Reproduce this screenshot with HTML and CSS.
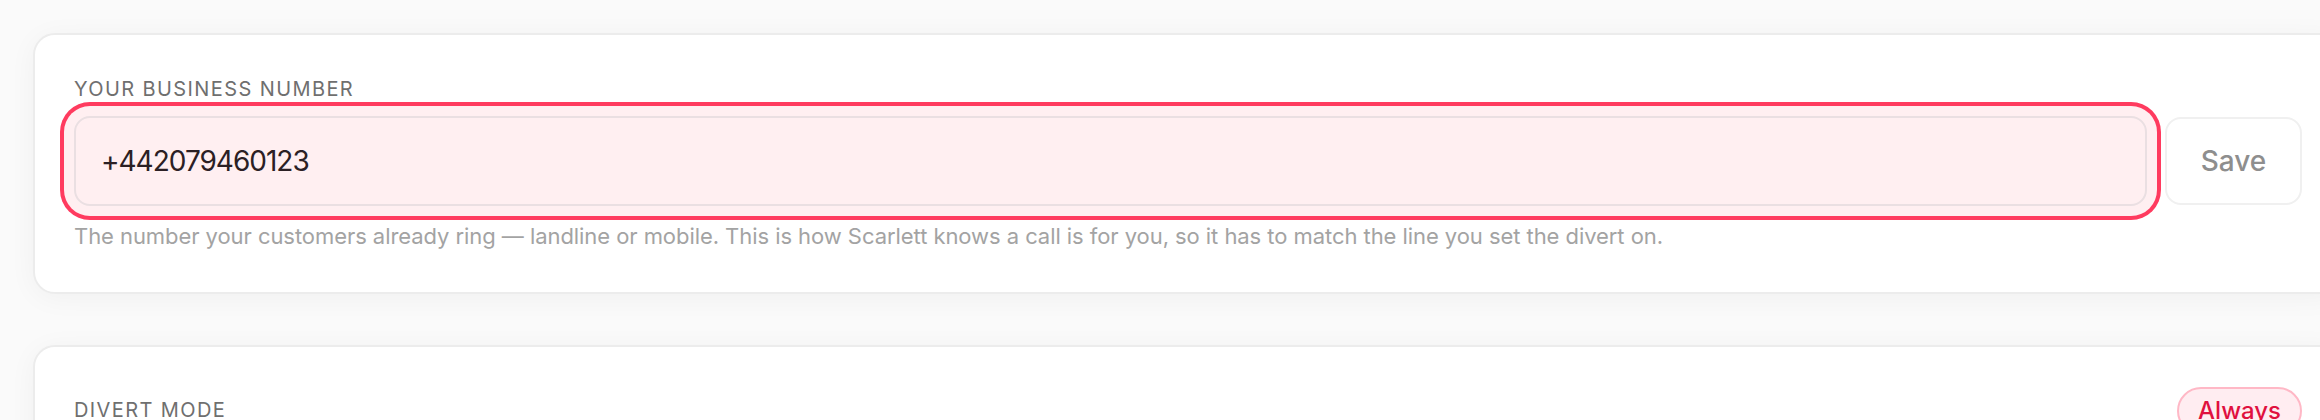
FILE: index.html
```html
<!DOCTYPE html>
<html lang="en">
<head>
<meta charset="utf-8">
<title>Business number</title>
<link rel="stylesheet" href="styles.css">
</head>
<body>
<main class="page">
  <section class="card">
    <label class="field-label" for="biz">YOUR BUSINESS NUMBER</label>
    <div class="field-row">
      <input id="biz" class="field-input is-error" type="text" value="+442079460123">
      <button class="save-btn" type="button">Save</button>
    </div>
    <p class="hint">The number your customers already ring — landline or mobile. This is how Scarlett knows a call is for you, so it has to match the line you set the divert on.</p>
  </section>
  <section class="card">
    <div class="card-head">
      <span class="field-label">DIVERT MODE</span>
      <span class="pill">Always</span>
    </div>
  </section>
</main>
</body>
</html>
```
FILE: styles.css
```css
html, body {
  margin: 0;
  padding: 0;
}
body {
  background: #fafafa;
  overflow: hidden;
  font-family: Inter, "Liberation Sans", sans-serif;
}
.page {
  padding: 33px 0 0 33px;
  display: flex;
  flex-direction: column;
  gap: 51px;
  width: 2310px;
}
.card {
  box-sizing: border-box;
  width: 2310px;
  background: #ffffff;
  border: 2px solid #ececec;
  border-radius: 22px;
  box-shadow: 0 4px 28px rgba(0, 0, 0, 0.045);
  padding: 40px 39px 40px 39px;
}
.field-label {
  display: block;
  font-size: 20px;
  line-height: 28px;
  letter-spacing: 1.4px;
  color: #6f6f6f;
  font-weight: 400;
}
.field-row {
  display: flex;
  align-items: center;
  gap: 18px;
  margin-top: 13px;
}
.field-input {
  flex: 1;
  box-sizing: border-box;
  height: 90px;
  border: 2px solid #eadfe2;
  border-radius: 16px;
  background: #ffeff1;
  padding: 0 0 0 25px;
  font-family: Inter, "Liberation Sans", sans-serif;
  font-size: 28px;
  letter-spacing: -1px;
  color: #2b2024;
  outline: none;
}
.field-input.is-error {
  box-shadow: 0 0 0 10px #ffeff1, 0 0 0 14px #ff3b5f;
}
.save-btn {
  box-sizing: border-box;
  width: 137px;
  height: 88px;
  border: 2px solid #f0f0f0;
  border-radius: 16px;
  background: #ffffff;
  font-family: Inter, "Liberation Sans", sans-serif;
  font-size: 28px;
  font-weight: 500;
  color: #8e8e8e;
  padding: 0;
}
.hint {
  margin: 14px 0 0 0;
  font-size: 22px;
  line-height: 32px;
  letter-spacing: -0.06px;
  color: #a3a3a3;
}
.card-head {
  display: flex;
  justify-content: space-between;
  align-items: center;
}
.card-head .field-label {
  margin-top: -3px;
}
.pill {
  box-sizing: border-box;
  border: 2px solid #ffb8c6;
  background: #ffedf1;
  color: #e0113f;
  border-radius: 999px;
  padding: 7px 19px;
  font-size: 24px;
  line-height: 30px;
  font-weight: 500;
}
```
